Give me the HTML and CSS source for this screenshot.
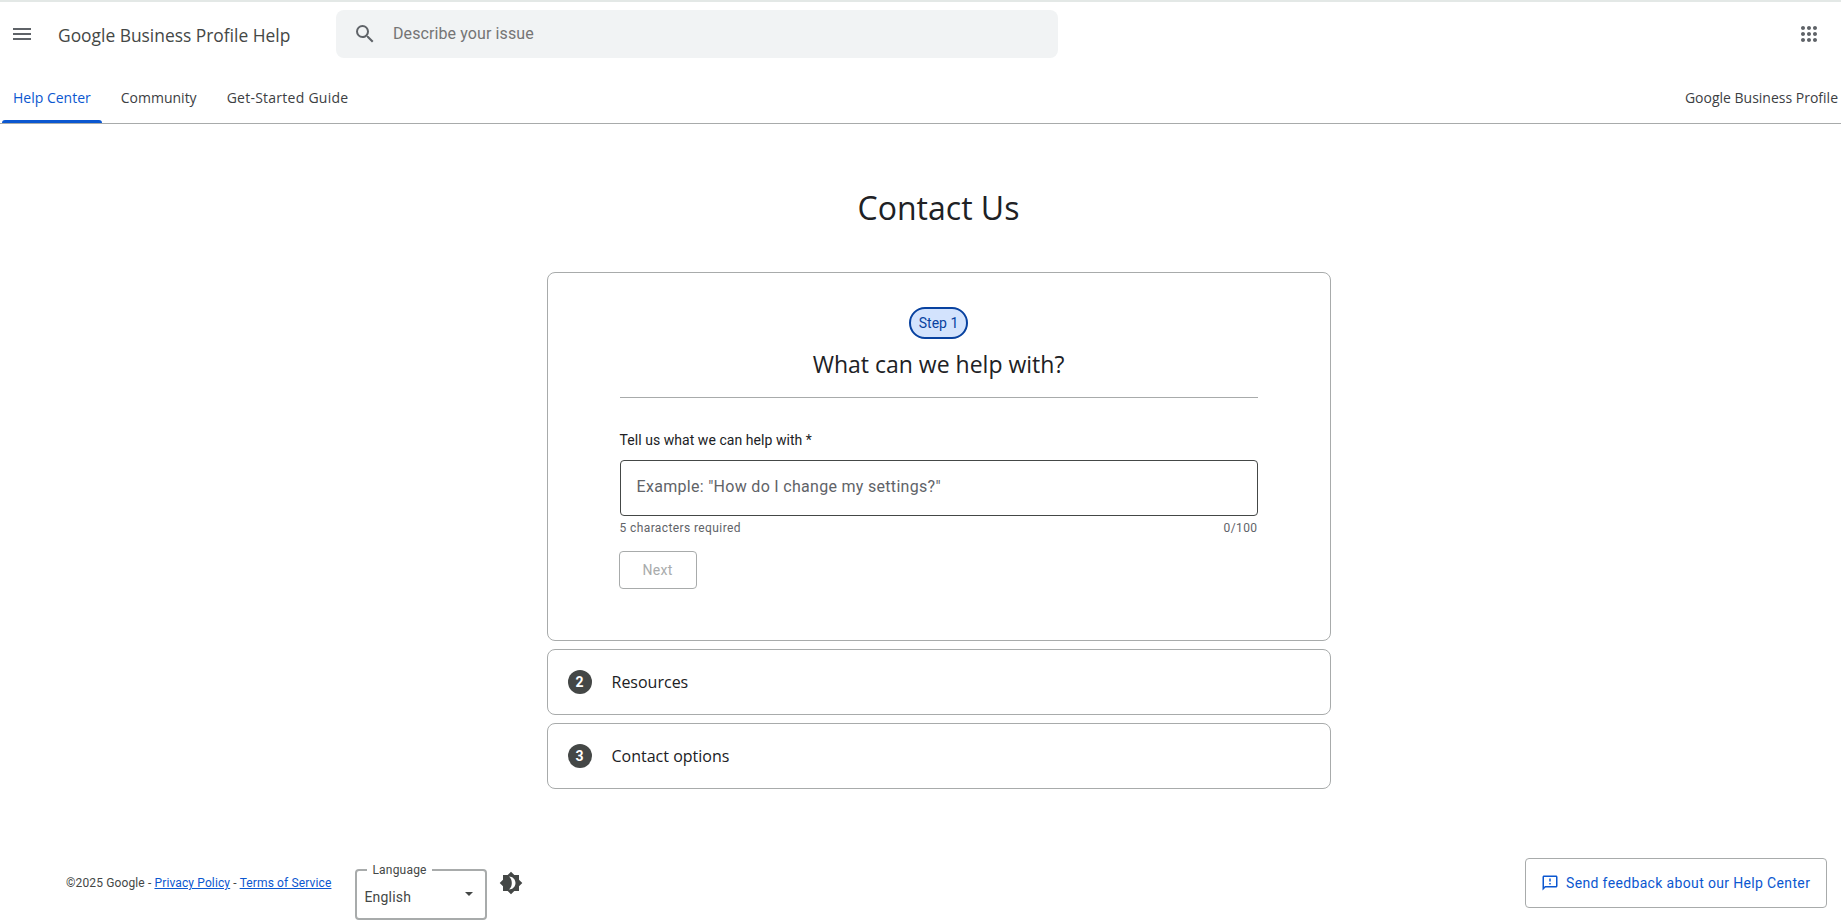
FILE: index.html
```html
<!DOCTYPE html>
<html>
<head>
  <title>Google Business Profile Help</title>
  <link rel="stylesheet" href="styles.css">
</head>
<body>

  <header class="topbar">
    <svg class="menu-icon" width="24" height="24" viewBox="0 0 24 24"><path d="M3 18h18v-2H3v2zm0-5h18v-2H3v2zm0-7v2h18V6H3z"/></svg>
    <div class="product-name">Google Business Profile Help</div>
    <div class="search">
      <svg width="24" height="24" viewBox="0 0 24 24"><path d="M15.5 14h-.79l-.28-.27A6.47 6.47 0 0 0 16 9.5 6.5 6.5 0 1 0 9.5 16c1.61 0 3.09-.59 4.23-1.57l.27.28v.79l5 4.99L20.49 19l-4.99-5zm-6 0C7.01 14 5 11.99 5 9.5S7.01 5 9.5 5 14 7.01 14 9.5 11.99 14 9.5 14z"/></svg>
      <span>Describe your issue</span>
    </div>
    <svg class="apps-icon" width="24" height="24" viewBox="0 0 24 24"><path d="M6 8c1.1 0 2-.9 2-2s-.9-2-2-2-2 .9-2 2 .9 2 2 2zm6 12c1.1 0 2-.9 2-2s-.9-2-2-2-2 .9-2 2 .9 2 2 2zm-6 0c1.1 0 2-.9 2-2s-.9-2-2-2-2 .9-2 2 .9 2 2 2zm0-6c1.1 0 2-.9 2-2s-.9-2-2-2-2 .9-2 2 .9 2 2 2zm6 0c1.1 0 2-.9 2-2s-.9-2-2-2-2 .9-2 2 .9 2 2 2zm4-8c0 1.1.9 2 2 2s2-.9 2-2-.9-2-2-2-2 .9-2 2zm-4 2c1.1 0 2-.9 2-2s-.9-2-2-2-2 .9-2 2 .9 2 2 2zm6 6c1.1 0 2-.9 2-2s-.9-2-2-2-2 .9-2 2 .9 2 2 2zm0 6c1.1 0 2-.9 2-2s-.9-2-2-2-2 .9-2 2 .9 2 2 2z"/></svg>
  </header>

  <nav class="tabs">
    <a class="tab active">Help Center</a>
    <a class="tab">Community</a>
    <a class="tab tab-guide">Get-Started Guide</a>
    <a class="tab-right">Google Business Profile</a>
  </nav>

  <main class="content">
    <h1>Contact Us</h1>

    <section class="card step-card">
      <div class="step-pill">Step 1</div>
      <h2>What can we help with?</h2>
      <hr>
      <label class="field-label">Tell us what we can help with *</label>
      <div class="text-box">Example: "How do I change my settings?"</div>
      <div class="helper">
        <span>5 characters required</span>
        <span>0/100</span>
      </div>
      <button class="next-btn" disabled>Next</button>
    </section>

    <section class="card step-row">
      <span class="step-num">2</span>
      <span class="step-title">Resources</span>
    </section>

    <section class="card step-row">
      <span class="step-num">3</span>
      <span class="step-title">Contact options</span>
    </section>
  </main>

  <footer class="footer">
    <div class="legal">©2025 Google - <a>Privacy Policy</a> - <a>Terms of Service</a></div>
    <div class="language">
      <span class="language-label">Language</span>
      <span>English</span>
      <span class="caret"></span>
    </div>
    <svg class="theme-icon" width="24" height="24" viewBox="0 0 24 24"><path fill-rule="evenodd" d="M12 .7 15.300 4H20v4.700L23.300 12 20 15.300V20h-4.700L12 23.300 8.700 20H4v-4.700L.7 12 4 8.700V4h4.700L12 .7zM10 5.500c3.600 0 6.500 2.900 6.500 6.500s-2.900 6.500-6.500 6.500c1.800-1.500 2.800-3.900 2.800-6.500S11.800 7 10 5.500z"/></svg>
    <button class="feedback-btn">
      <svg width="18" height="18" viewBox="0 0 24 24"><path d="M20 2H4c-1.100 0-2 .9-2 2v18l4-4h14c1.100 0 2-.9 2-2V4c0-1.100-.9-2-2-2zm0 14H5.200L4 17.200V4h16v12zM11 12h2v2h-2zm0-6h2v4h-2z"/></svg>
      Send feedback about our Help Center
    </button>
  </footer>

</body>
</html>
```

FILE: styles.css
```css
* {
  box-sizing: border-box;
}

html, body {
  height: 100%;
}

body {
  margin: 0;
  background: #fff;
  color: #202124;
  font-family: Roboto, Arial, sans-serif;
  border-top: 2px solid #e3e8e6;
  overflow: hidden;
}

h1, h2 {
  font-family: "Open Sans", Roboto, sans-serif;
  font-weight: 400;
  margin: 0;
  color: #202124;
  text-align: center;
}

/* Top bar */
.topbar {
  display: flex;
  align-items: center;
  height: 66px;
  padding-right: 20px;
  padding-bottom: 2px;
}

.menu-icon {
  fill: #5f6368;
  margin-left: 10px;
}

.product-name {
  font-family: "Open Sans", Roboto, sans-serif;
  font-size: 17.4px;
  color: #444746;
  margin-left: 24px;
  margin-top: 1px;
  width: 278px;
  white-space: nowrap;
}

.search {
  display: flex;
  align-items: center;
  width: 722px;
  height: 48px;
  padding-left: 17px;
  background: #f1f3f4;
  border-radius: 8px;
  font-size: 16px;
  letter-spacing: .1px;
  color: #757575;
}

.search svg {
  fill: #5f6368;
  margin-right: 16px;
}

.search span {
  padding-bottom: 2px;
}

.apps-icon {
  fill: #5f6368;
  margin-left: auto;
}

/* Tabs */
.tabs {
  display: flex;
  align-items: stretch;
  height: 56px;
  padding-left: 2px;
  border-bottom: 1px solid #a8abab;
  font-family: "Open Sans", Roboto, sans-serif;
  font-size: 14px;
  color: #3c4043;
}

.tab {
  position: relative;
  display: flex;
  align-items: center;
  padding: 4px 11px 0;
  margin-right: 8px;
}

.tab-guide {
  letter-spacing: .25px;
}

.tab.active {
  color: #0b57d0;
}

.tab.active::after {
  content: "";
  position: absolute;
  left: 0;
  right: 0;
  bottom: 0;
  height: 3px;
  background: #0b57d0;
  border-radius: 3px 3px 0 0;
}

.tab-right {
  display: flex;
  align-items: center;
  margin-left: auto;
  padding: 4px 3px 0 0;
}

/* Main column */
.content {
  width: 784px;
  margin: 0 auto;
  padding-top: 60px;
  transform: translateX(18px);
}

h1 {
  font-size: 32px;
  line-height: 48px;
  margin-bottom: 40px;
}

.card {
  border: 1px solid #a8abab;
  border-radius: 8px;
  margin-bottom: 8px;
}

.step-card {
  height: 369px;
  padding: 34px 72px 0;
}

.step-pill {
  width: 59px;
  height: 32px;
  margin: 0 auto;
  display: flex;
  align-items: center;
  justify-content: center;
  background: #d3e3fd;
  border: 2px solid #0842a0;
  border-radius: 16px;
  font-size: 14px;
  color: #0842a0;
}

h2 {
  font-size: 23px;
  line-height: 32px;
  margin-top: 9px;
}

hr {
  border: 0;
  border-top: 1px solid #a8abab;
  margin: 17px 0 0;
}

.field-label {
  display: block;
  margin-top: 32px;
  font-size: 14px;
  line-height: 20px;
  letter-spacing: .05px;
  color: #202124;
}

.text-box {
  display: flex;
  align-items: center;
  height: 56px;
  margin-top: 10px;
  padding: 0 0 3px 16px;
  border: 1px solid #444746;
  border-radius: 4px;
  font-size: 16px;
  letter-spacing: .3px;
  color: #5f6368;
}

.helper {
  display: flex;
  justify-content: space-between;
  margin-top: 4px;
  font-size: 12px;
  line-height: 16px;
  letter-spacing: .4px;
  color: #5f6368;
}

.next-btn {
  display: block;
  width: 78px;
  height: 38px;
  margin-top: 15px;
  margin-left: -1px;
  background: #fff;
  border: 1px solid #a8abab;
  border-radius: 4px;
  font-family: Roboto, sans-serif;
  font-size: 14px;
  letter-spacing: .25px;
  color: #a8abab;
}

.step-row {
  display: flex;
  align-items: center;
  height: 66px;
  padding-left: 20px;
}

.step-num {
  display: flex;
  align-items: center;
  justify-content: center;
  width: 24px;
  height: 24px;
  border-radius: 50%;
  background: #444746;
  color: #fff;
  font-size: 14px;
  font-weight: 700;
}

.step-title {
  margin-left: 20px;
  font-family: "Open Sans", Roboto, sans-serif;
  font-size: 16px;
  font-weight: 500;
  color: #202124;
}

/* Footer */
.footer {
  display: flex;
  align-items: center;
  padding: 0 14px 0 66px;
  margin-top: 69px;
  height: 50px;
}

.legal {
  font-size: 12px;
  letter-spacing: .13px;
  color: #444746;
}

.legal a {
  color: #0b57d0;
  text-decoration: underline;
}

.language {
  position: relative;
  display: flex;
  align-items: center;
  justify-content: space-between;
  width: 132px;
  height: 51px;
  margin: 22px 0 0 24px;
  padding: 6px 12px 0 7px;
  border: 2px solid #a8abab;
  border-radius: 4px;
  font-size: 14px;
  letter-spacing: .2px;
  color: #444746;
}

.language-label {
  position: absolute;
  top: -9px;
  left: 10px;
  padding: 0 5px;
  background: #fff;
  font-size: 12px;
  line-height: 16px;
}

.caret {
  width: 0;
  height: 0;
  margin-top: -6px;
  border-left: 4px solid transparent;
  border-right: 4px solid transparent;
  border-top: 4px solid #444746;
}

.theme-icon {
  fill: #444746;
  margin-left: 12px;
}

.feedback-btn {
  display: flex;
  align-items: center;
  gap: 7px;
  margin-left: auto;
  height: 50px;
  width: 302px;
  padding: 0 15px;
  background: #fff;
  border: 1px solid #a8abab;
  border-radius: 4px;
  font-family: Roboto, sans-serif;
  font-size: 14px;
  letter-spacing: .35px;
  color: #0b57d0;
  white-space: nowrap;
}

.feedback-btn svg {
  fill: #0b57d0;
}
```
